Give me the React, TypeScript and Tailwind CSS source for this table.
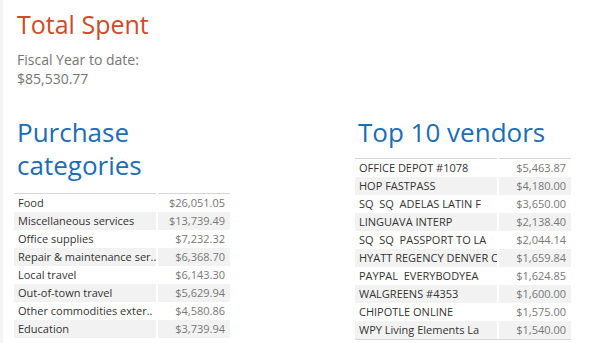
import React from 'react';

const categories: [string, string][] = [
  ['Food', '$26,051.05'],
  ['Miscellaneous services', '$13,739.49'],
  ['Office supplies', '$7,232.32'],
  ['Repair & maintenance ser..', '$6,368.70'],
  ['Local travel', '$6,143.30'],
  ['Out-of-town travel', '$5,629.94'],
  ['Other commodities exter..', '$4,580.86'],
  ['Education', '$3,739.94'],
  ['Professional services', '$3,102.18'],
];

const vendors: [string, string][] = [
  ['OFFICE DEPOT #1078', '$5,463.87'],
  ['HOP FASTPASS', '$4,180.00'],
  ['SQ  SQ  ADELAS LATIN F', '$3,650.00'],
  ['LINGUAVA INTERP', '$2,138.40'],
  ['SQ  SQ  PASSPORT TO LA', '$2,044.14'],
  ['HYATT REGENCY DENVER C', '$1,659.84'],
  ['PAYPAL  EVERYBODYEA', '$1,624.85'],
  ['WALGREENS #4353', '$1,600.00'],
  ['CHIPOTLE ONLINE', '$1,575.00'],
  ['WPY Living Elements La', '$1,540.00'],
];

const Table: React.FC<{ rows: [string, string][]; bottom?: boolean }> = ({ rows, bottom }) => (
  <div className={`w-[216px] ${bottom ? 'border-b border-[#d9d9d9]' : ''}`}>
    {/* header rule, split at the column gap */}
    <div className="flex gap-[2px] h-px">
      <div className="w-[142px] bg-[#d6d6d6]" />
      <div className="flex-1 bg-[#d6d6d6]" />
    </div>
    {rows.map(([label, value], i) => (
      <div key={label} className="flex gap-[2px] h-[18px] text-[11px] leading-[18px]">
        <div className={`w-[142px] pl-[4px] overflow-hidden whitespace-pre text-[#333] ${i % 2 ? 'bg-[#f2f2f2]' : ''}`}>
          {label}
        </div>
        <div className={`flex-1 pr-[5px] text-right text-[#777] ${i % 2 ? 'bg-[#f2f2f2]' : ''}`}>{value}</div>
      </div>
    ))}
  </div>
);

export default function App() {
  return (
    <div
      className="w-[614px] h-[343px] overflow-hidden bg-white border-l-[3px] border-[#f4f4f4]"
      style={{ fontFamily: '"Open Sans", "Noto Sans", sans-serif' }}
    >
      <div className="pl-[14px] pt-[9px]">
        <div className="text-[25px] leading-[30px] text-[#cf4a28]">Total Spent</div>
        <div className="mt-[11px] text-[14px] leading-[19px] text-[#767676]">
          Fiscal Year to date:
          <br />
          $85,530.77
        </div>
      </div>
      <div className="flex mt-[28px]">
        <div className="pl-[11px] w-[352px]">
          <div className="pl-[3px] text-[26px] leading-[33px] text-[#1b6db5]">
            Purchase
            <br />
            categories
          </div>
          <div className="mt-[11px]">
            <Table rows={categories} />
          </div>
        </div>
        <div>
          <div className="pl-[3px] text-[26px] leading-[33px] text-[#1b6db5]">Top 10 vendors</div>
          <div className="mt-[9px]">
            <Table rows={vendors} bottom />
          </div>
        </div>
      </div>
    </div>
  );
}
